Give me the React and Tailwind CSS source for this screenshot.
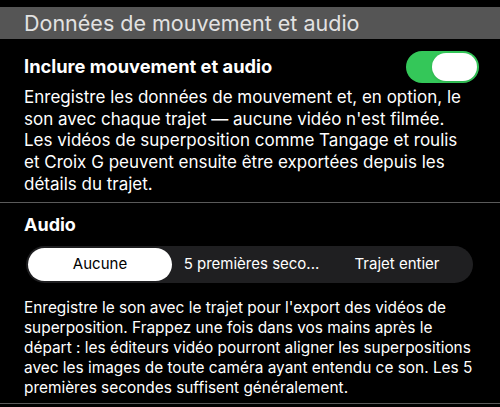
export default function App() {
    return (
        <div className="w-[500px] h-[407px] bg-black overflow-hidden pt-[7px] text-white" style={{ fontFamily: 'Inter, "Liberation Sans", sans-serif' }}>
            {/* Section header */}
            <div className="h-[32px] bg-[#555555] px-6 flex items-center text-[21.5px] text-[#e2e2e2]">
                Données de mouvement et audio
            </div>

            {/* Toggle row */}
            <div className="mt-3 flex items-center justify-between pl-6 pr-[21px] h-[32px]">
                <span className="text-[18.3px] font-bold">Inclure mouvement et audio</span>
                <div className="w-[73px] h-[32px] rounded-full bg-[#34c759] flex items-center justify-end pr-[2px]">
                    <div className="w-[45px] h-[28px] rounded-full bg-white shadow"></div>
                </div>
            </div>

            <p className="mt-[4px] px-6 text-[17px] leading-[21.7px]">
                Enregistre les données de mouvement et, en option, le son avec chaque trajet — aucune vidéo n'est filmée. Les vidéos de superposition comme Tangage et roulis et Croix G peuvent ensuite être exportées depuis les détails du trajet.
            </p>

            <div className="mt-[6px] border-t border-[#5a5a5a]">
                <div className="mt-[11px] px-6 text-[18px] font-bold leading-[22px]">Audio</div>

                {/* Segmented control */}
                <div className="mt-[10px] ml-[26px] w-[447px] h-[37px] rounded-full bg-[#1f1f21] p-[2px] flex items-center text-[15px]">
                    <div className="w-[144px] h-full rounded-full bg-white text-black flex items-center justify-center">Aucune</div>
                    <div className="flex-1 flex items-center justify-center">5 premières seco...</div>
                    <div className="w-[140px] flex items-center justify-center pr-2">Trajet entier</div>
                </div>

                <p className="mt-[15px] px-6 pb-[5px] text-[15.4px] leading-[20px] border-b border-[#5a5a5a]">
                    Enregistre le son avec le trajet pour l'export des vidéos de superposition. Frappez une fois dans vos mains après le départ : les éditeurs vidéo pourront aligner les superpositions avec les images de toute caméra ayant entendu ce son. Les 5 premières secondes suffisent généralement.
                </p>
            </div>
        </div>
    );
}
